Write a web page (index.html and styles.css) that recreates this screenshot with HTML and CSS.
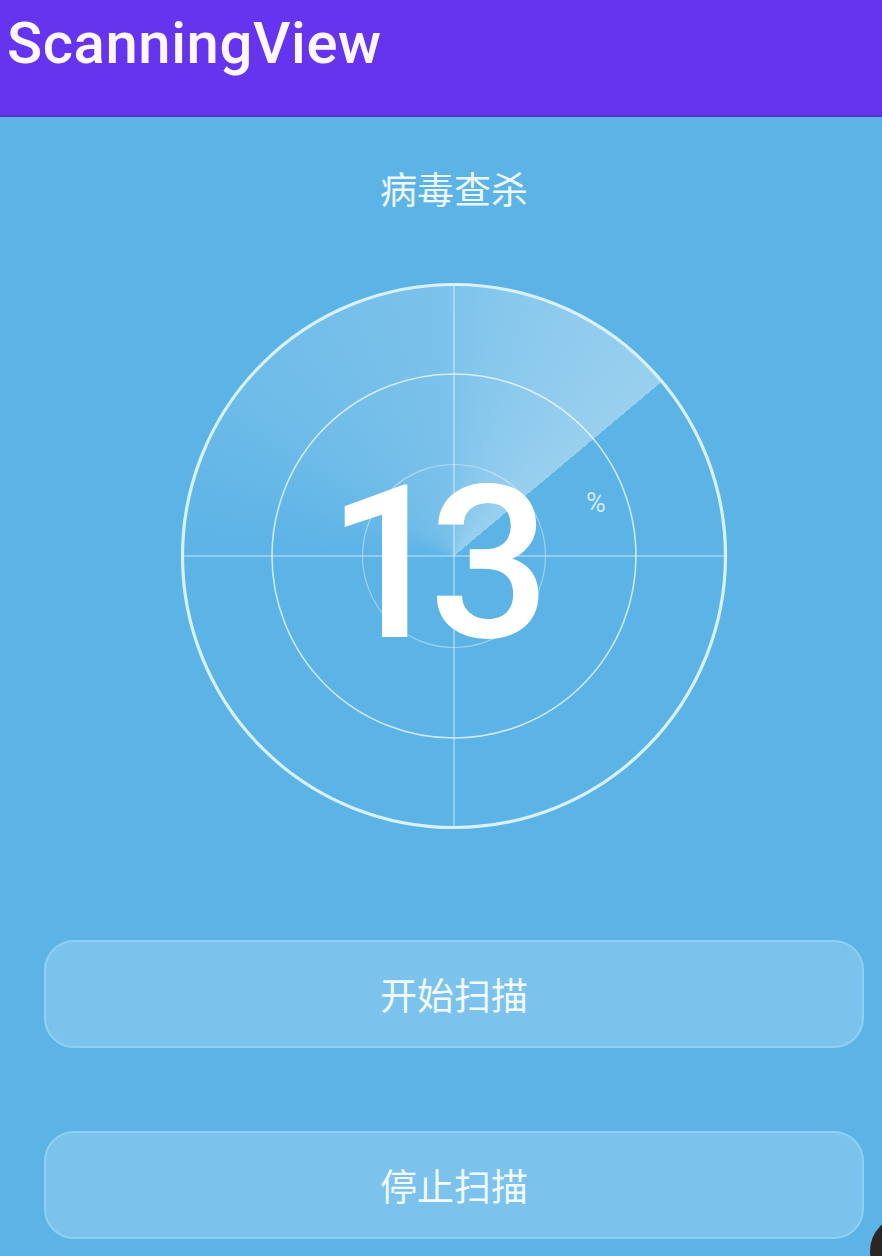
FILE: index.html
```html
<!DOCTYPE html>
<html lang="zh">
<head>
<meta charset="utf-8">
<title>ScanningView</title>
<link rel="stylesheet" href="styles.css">
</head>
<body>
<header class="appbar">
  <h1 class="appbar-title">ScanningView</h1>
</header>
<main class="content">
  <div class="scan-title">病毒查杀</div>
  <div class="radar">
    <div class="sweep"></div>
    <svg class="radar-lines" width="548" height="548" viewBox="0 0 548 548">
      <line x1="2" y1="274" x2="546" y2="274" stroke="rgba(255,255,255,0.45)" stroke-width="1.5"/>
      <line x1="274" y1="2" x2="274" y2="546" stroke="rgba(255,255,255,0.45)" stroke-width="1.5"/>
      <circle cx="274" cy="274" r="91.5" fill="none" stroke="rgba(255,255,255,0.4)" stroke-width="1.2"/>
      <circle cx="274" cy="274" r="182" fill="none" stroke="rgba(255,255,255,0.7)" stroke-width="1.6"/>
      <circle cx="274" cy="274" r="271.5" fill="none" stroke="#d9f1fc" stroke-width="3.2"/>
    </svg>
    <div class="percent-value">13</div>
    <div class="percent-sign">%</div>
  </div>
  <button class="action-btn btn-start">开始扫描</button>
  <button class="action-btn btn-stop">停止扫描</button>
</main>
<div class="corner-clip"><div class="float-ball"></div></div>
</body>
</html>
```

FILE: styles.css
```css
html, body {
  margin: 0;
  padding: 0;
}
body {
  width: 882px;
  height: 1256px;
  overflow: hidden;
  background: #5bb3e6;
  position: relative;
  font-family: "Noto Sans CJK SC", "Noto Sans", sans-serif;
}
.appbar {
  height: 115px;
  background: #6633ee;
  border-bottom: 2px solid #5a2fd6;
  display: flex;
  align-items: flex-start;
}
.appbar-title {
  margin: 0;
  padding: 11px 0 0 7px;
  font-family: "Roboto", sans-serif;
  font-weight: 500;
  font-size: 58px;
  line-height: 64px;
  letter-spacing: 0.6px;
  color: #fdf7ff;
}
.content {
  padding-left: 26px;
  display: flex;
  flex-direction: column;
  align-items: center;
}
.scan-title {
  margin-top: 46px;
  font-size: 37px;
  line-height: 50px;
  color: #eef7fc;
}
.radar {
  margin-top: 69px;
  width: 548px;
  height: 548px;
  position: relative;
}
.sweep {
  position: absolute;
  left: 3px;
  top: 3px;
  width: 542px;
  height: 542px;
  border-radius: 50%;
  background: conic-gradient(from 270deg,
    rgba(255,255,255,0) 0deg,
    rgba(255,255,255,0.12) 40deg,
    rgba(255,255,255,0.2) 88deg,
    rgba(255,255,255,0.27) 100deg,
    rgba(255,255,255,0.38) 140deg,
    rgba(255,255,255,0) 140deg);
}
.radar-lines {
  position: absolute;
  left: 0;
  top: 0;
}
.percent-value {
  position: absolute;
  left: 147px;
  top: 175px;
  font-family: "Roboto", sans-serif;
  font-weight: 500;
  font-size: 214px;
  line-height: 214px;
  letter-spacing: -20px;
  color: #ffffff;
}
.percent-sign {
  position: absolute;
  left: 406px;
  top: 206px;
  font-family: "Roboto", sans-serif;
  font-size: 27px;
  line-height: 30px;
  color: #cfeaf8;
}
.action-btn {
  width: 820px;
  height: 108px;
  border-radius: 30px;
  border: 2px solid #8ed0f2;
  background: #7bc3ec;
  color: #f3fafe;
  font-family: "Noto Sans CJK SC", "Noto Sans", sans-serif;
  font-size: 37px;
  padding: 0;
  display: flex;
  align-items: center;
  justify-content: center;
}
.btn-start {
  margin-top: 110px;
}
.btn-stop {
  margin-top: 83px;
}
.corner-clip {
  position: absolute;
  right: 0;
  bottom: 0;
  width: 14px;
  height: 42px;
  overflow: hidden;
}
.float-ball {
  position: absolute;
  left: 2px;
  top: 2px;
  width: 70px;
  height: 70px;
  border-radius: 50%;
  background: #2b2622;
}
```
